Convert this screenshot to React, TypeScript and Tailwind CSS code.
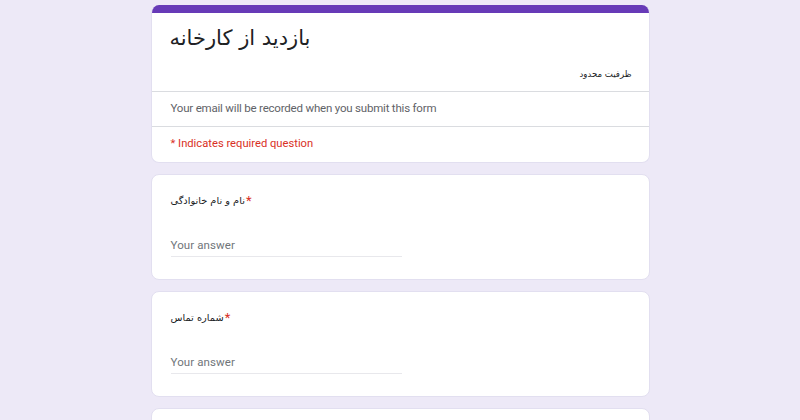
import React from "react";

const fa = { fontFamily: '"DejaVu Sans", "Noto Sans", sans-serif' } as const;

function Question({ label }: { label: string }) {
  return (
    <div className="bg-white rounded-[8px] border border-[#e2dff0] h-[106px] pl-[19px] pr-[19px] pt-[16px]">
      <div className="flex items-center h-[20px] text-[9.8px] text-[#202124]">
        <span dir="rtl" style={fa}>{label}</span>
        <span className="text-[#d93025] ml-[1px] text-[13px] font-['Roboto']">*</span>
      </div>
      <div className="mt-[24px] w-[231px] border-b border-[#e8e8ec] h-[22px] flex items-center text-[11.5px] text-[#70757a] font-['Roboto'] tracking-[0.1px]">
        Your answer
      </div>
    </div>
  );
}

export default function App() {
  return (
    <div className="w-[800px] h-[420px] overflow-hidden bg-[#ede9f7] font-['Roboto']">
      <div className="w-[499px] mx-auto pt-[5px] flex flex-col gap-[11px]">
        <div className="bg-white rounded-[8px] overflow-hidden border border-[#e2dff0] border-t-0">
          <div className="h-[8px] bg-[#673ab7]" />
          <div className="pl-[18px] pr-[17px] pt-[9px] pb-[9px]">
            <div dir="rtl" className="text-left text-[21px] leading-[32px] text-[#202124]" style={fa}>
              <span>بازدید از کارخانه</span>
            </div>
            <div dir="rtl" className="mt-[12px] text-[8.6px] leading-[16px] text-[#202124] text-right" style={fa}>
              ظرفیت محدود
            </div>
          </div>
          <div className="h-[35px] border-t border-[#dadce0] flex items-center pl-[19px] text-[11.5px] tracking-[-0.2px] text-[#5f6368]">
            Your email will be recorded when you submit this form
          </div>
          <div className="h-[36px] border-t border-[#dadce0] flex items-center pl-[19px] text-[11.2px] text-[#d93025]">
            * Indicates required question
          </div>
        </div>
        <Question label="نام و نام خانوادگی" />
        <Question label="شماره تماس" />
        <div className="bg-white rounded-[8px] border border-[#e2dff0] h-[106px]" />
      </div>
    </div>
  );
}
